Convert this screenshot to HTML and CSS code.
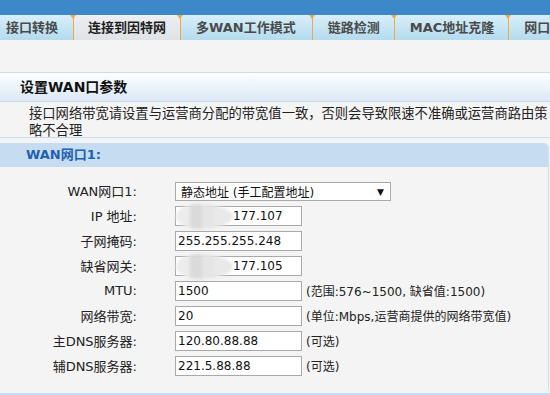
FILE: index.html
```html
<!DOCTYPE html>
<html lang="zh-CN">
<head>
<meta charset="utf-8">
<link rel="stylesheet" href="styles.css">
</head>
<body>
<div class="topbar"></div>
<nav class="tabs">
  <div class="tab first">接口转换</div>
  <div class="tab active">连接到因特网</div>
  <div class="tab wide">多WAN工作模式</div>
  <div class="tab">链路检测</div>
  <div class="tab">MAC地址克隆</div>
  <div class="tab">网口配置</div>
</nav>
<main class="content">
  <div class="sec-head">设置WAN口参数</div>
  <div class="desc">接口网络带宽请设置与运营商分配的带宽值一致，否则会导致限速不准确或运营商路由策<br>略不合理</div>
  <section class="panel">
    <div class="panel-title">WAN网口1:</div>
    <div class="form">
      <label class="lbl">WAN网口1:</label>
      <div class="select"><span>静态地址 (手工配置地址)</span><span class="arrow">▼</span></div>

      <label class="lbl">IP 地址:</label>
      <div class="field masked"><span class="blob"></span>177.107</div>
      <span class="hint"></span>

      <label class="lbl">子网掩码:</label>
      <div class="field">255.255.255.248</div>
      <span class="hint"></span>

      <label class="lbl">缺省网关:</label>
      <div class="field masked"><span class="blob"></span>177.105</div>
      <span class="hint"></span>

      <label class="lbl">MTU:</label>
      <div class="field">1500</div>
      <span class="hint">(范围:576~1500, 缺省值:1500)</span>

      <label class="lbl">网络带宽:</label>
      <div class="field">20</div>
      <span class="hint">(单位:Mbps,运营商提供的网络带宽值)</span>

      <label class="lbl">主DNS服务器:</label>
      <div class="field">120.80.88.88</div>
      <span class="hint">(可选)</span>

      <label class="lbl">辅DNS服务器:</label>
      <div class="field">221.5.88.88</div>
      <span class="hint">(可选)</span>
    </div>
  </section>
  <div class="next-bar"></div>
</main>
</body>
</html>
```

FILE: styles.css
```css
html, body {
  margin: 0;
  padding: 0;
}
body {
  width: 550px;
  height: 395px;
  overflow: hidden;
  background: #f4f4f4;
  font-family: "DejaVu Sans", "Noto Sans CJK SC", sans-serif;
  color: #222;
}
.topbar {
  height: 15px;
  background: #3d88c8;
}
.tabs {
  display: flex;
  height: 25px;
  background: linear-gradient(#d8eff9, #b3dbee);
  white-space: nowrap;
  overflow: hidden;
}
.tab {
  position: relative;
  padding: 0 14px 0 15px;
  line-height: 25px;
  font-size: 13px;
  font-weight: bold;
  color: #4a4a4a;
  border-left: 1px solid #f4a940;
}
.tab::before {
  content: "";
  position: absolute;
  left: -4px;
  top: 0;
  border-left: 3px solid transparent;
  border-right: 3px solid transparent;
  border-top: 4px solid #f4a940;
}
.tab.first {
  padding: 0 15px 0 6px;
  border-left: none;
}
.tab.first::before {
  display: none;
}
.tab.wide {
  padding-right: 16px;
}
.tab.active {
  padding: 0 14px;
  background: linear-gradient(#eceef0, #dfe3e7);
  color: #1e1e1e;
}
.content {
  padding-top: 32px;
}
.sec-head {
  height: 28px;
  line-height: 28px;
  padding-left: 20px;
  font-size: 14px;
  font-weight: bold;
  color: #111;
  border-top: 1px solid #c9dcee;
  border-bottom: 1px solid #c9dcee;
  background: linear-gradient(#fdfeff, #dbe8f6);
}
.desc {
  height: 32px;
  padding: 3px 0 0 29px;
  font-size: 13.3px;
  line-height: 17px;
  white-space: nowrap;
  color: #222;
  border-bottom: 1px solid #c9dcee;
}
.panel {
  margin-top: 5px;
  width: 548px;
  border-right: 1px solid #d3e2f0;
  border-radius: 0 5px 5px 0;
}
.panel-title {
  height: 24px;
  line-height: 24px;
  padding-left: 26px;
  background: #c6dcf0;
  border-radius: 0 5px 0 0;
  font-size: 13px;
  font-weight: bold;
  color: #2060b0;
}
.form {
  display: grid;
  grid-template-columns: 137px 165px auto;
  grid-auto-rows: 25px;
  padding: 11px 0 15px;
  align-items: center;
}
.lbl {
  font-size: 13px;
  color: #222;
  text-align: right;
}
.select, .field {
  box-sizing: border-box;
  background: #fff;
  border: 1px solid #a9a9a9;
  font-size: 12px;
  color: #111;
}
.select {
  grid-column: 2 / span 2;
  margin-left: 38px;
  width: 216px;
  height: 19px;
  display: flex;
  justify-content: space-between;
  align-items: center;
  padding: 0 6px 0 5px;
  margin-top: 2px;
}
.arrow {
  font-size: 9px;
  color: #111;
}
.field {
  margin-left: 38px;
  width: 127px;
  height: 20px;
  line-height: 18px;
  padding-left: 2px;
  white-space: nowrap;
  position: relative;
}
.field.masked {
  padding-left: 57px;
}
.blob {
  position: absolute;
  left: 0;
  top: -3px;
  width: 57px;
  height: 25px;
  border-radius: 40% 60% 60% 40% / 50%;
  background:
    linear-gradient(90deg, #ececec 0 14px, #dadada 14px 26px, #e5e5e5 26px 38px, #e9e9e9 38px 57px);
  filter: blur(1.5px);
}
.hint {
  padding-left: 4px;
  font-size: 12px;
  color: #222;
  white-space: nowrap;
}
.next-bar {
  height: 10px;
  background: #c6dcf0;
}
```
